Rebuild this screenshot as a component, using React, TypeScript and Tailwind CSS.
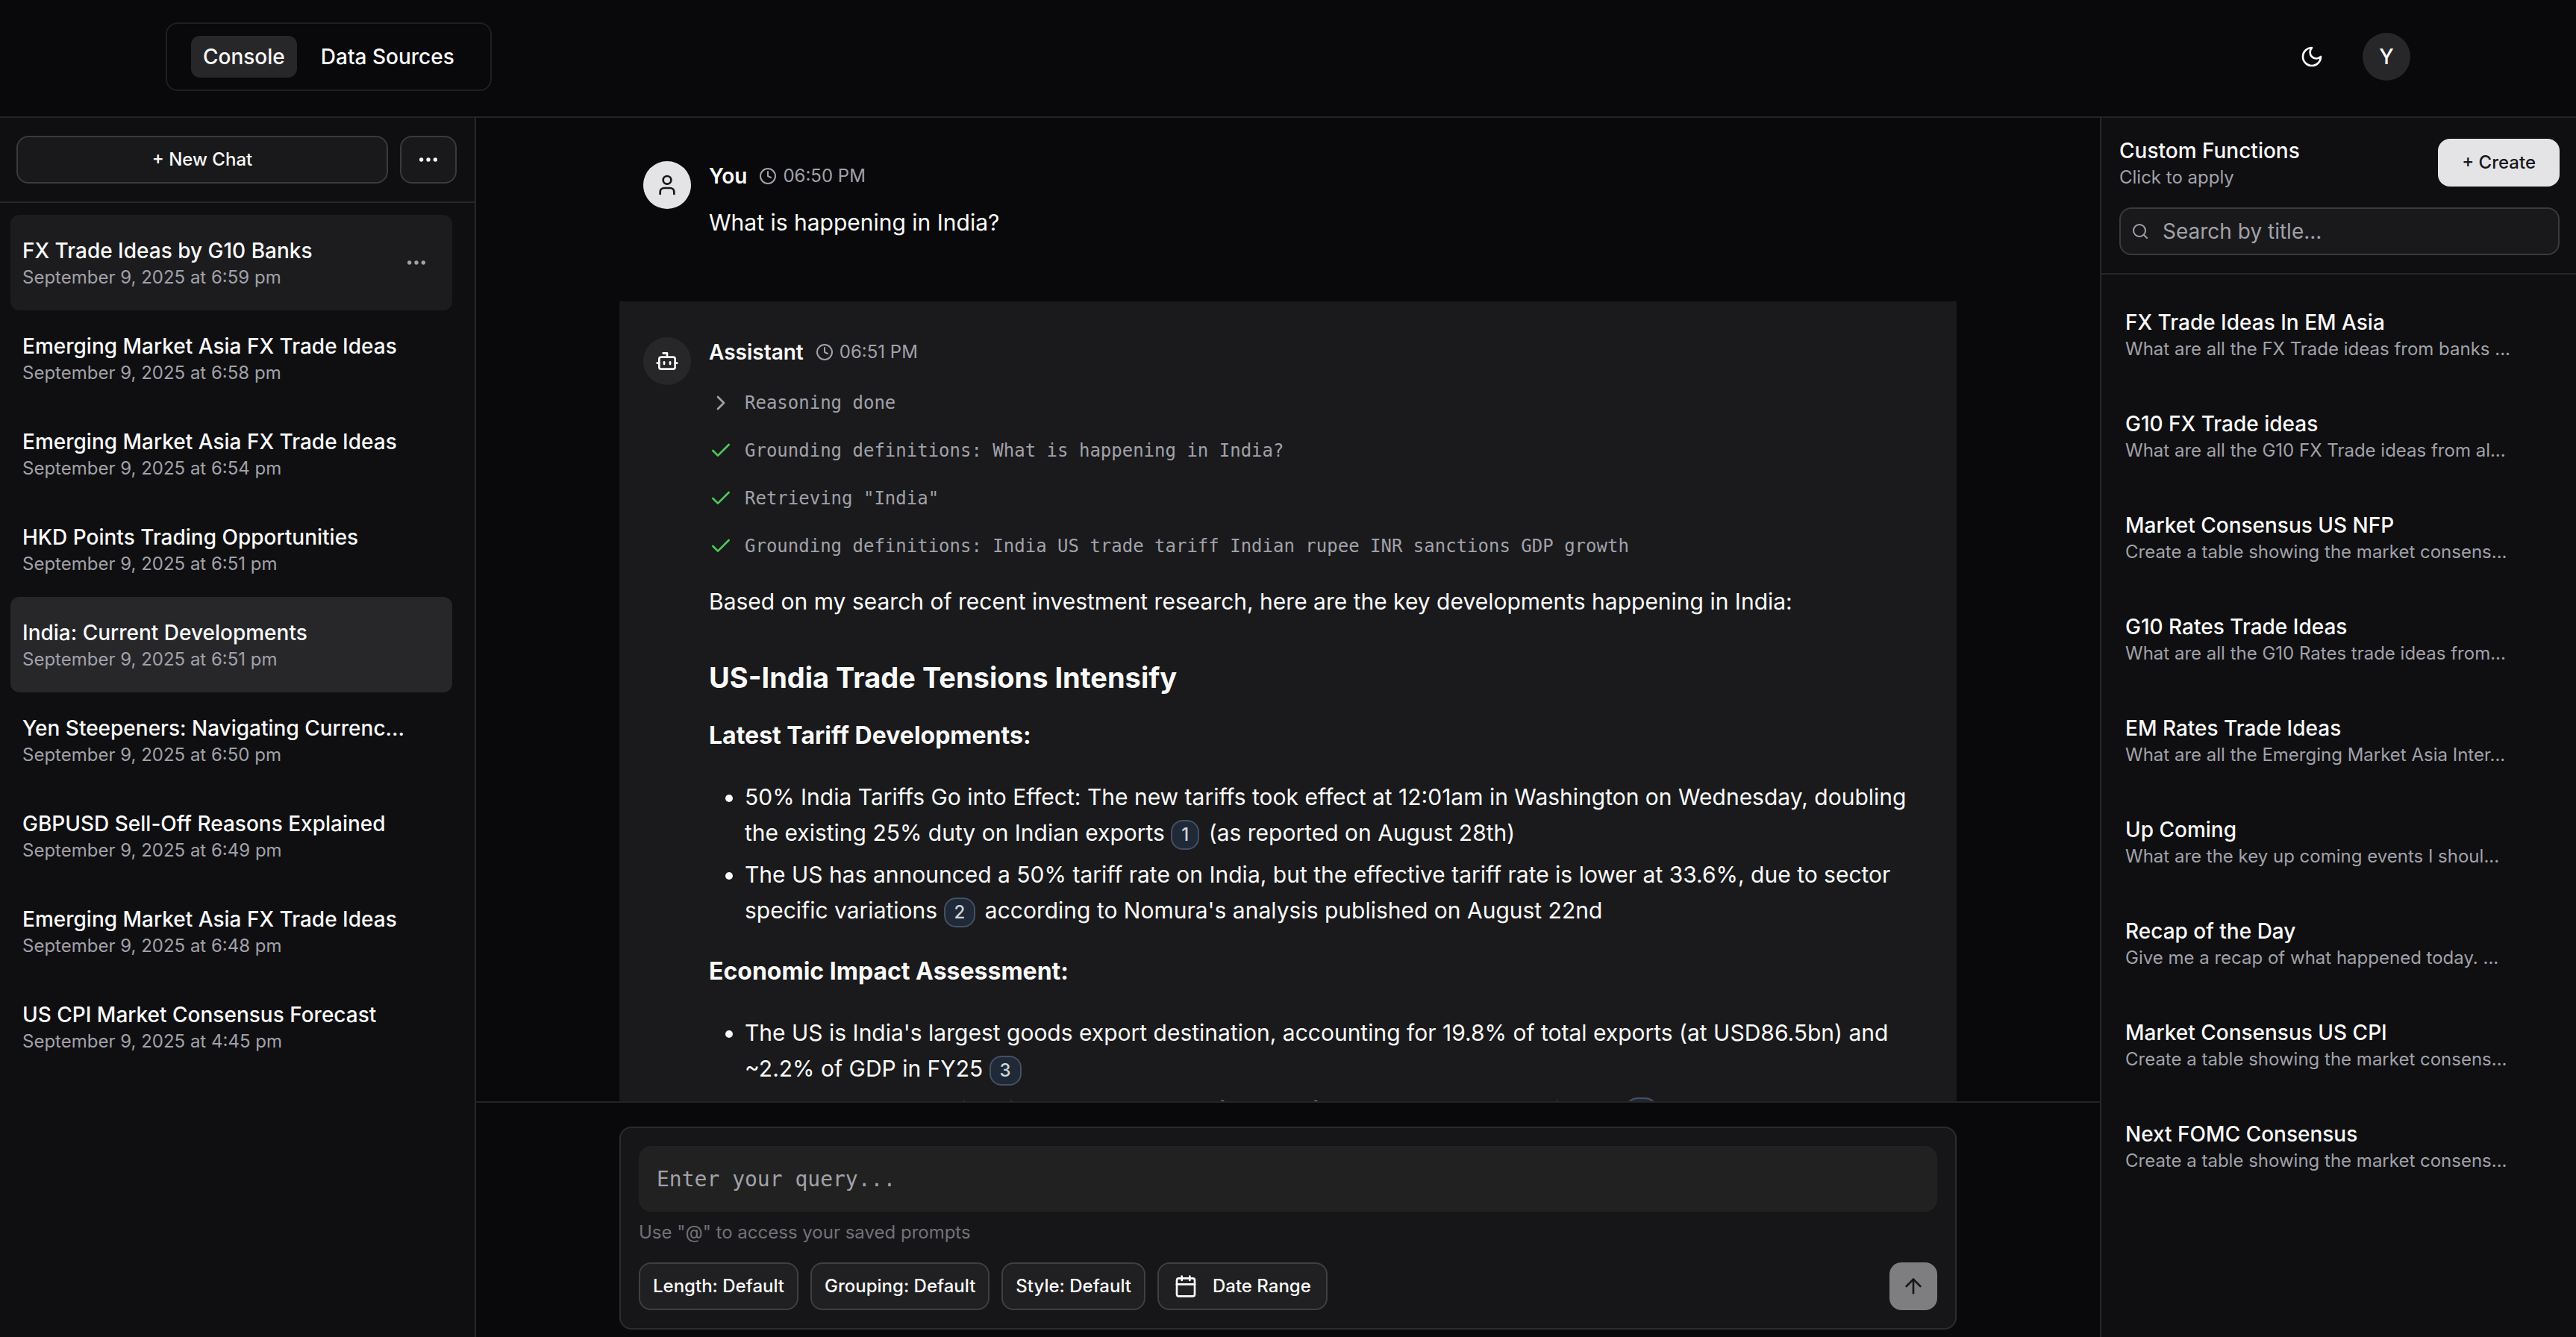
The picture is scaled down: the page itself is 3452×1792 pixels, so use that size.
import { FC, ReactNode } from "react";
import {
  ArrowUp,
  Bot,
  Calendar,
  Check,
  ChevronRight,
  Clock,
  Ellipsis,
  Search,
  User,
} from "lucide-react";

const chats = [
  { title: "FX Trade Ideas by G10 Banks", date: "September 9, 2025 at 6:59 pm", hovered: true },
  { title: "Emerging Market Asia FX Trade Ideas", date: "September 9, 2025 at 6:58 pm" },
  { title: "Emerging Market Asia FX Trade Ideas", date: "September 9, 2025 at 6:54 pm" },
  { title: "HKD Points Trading Opportunities", date: "September 9, 2025 at 6:51 pm" },
  { title: "India: Current Developments", date: "September 9, 2025 at 6:51 pm", active: true },
  { title: "Yen Steepeners: Navigating Currenc...", date: "September 9, 2025 at 6:50 pm" },
  { title: "GBPUSD Sell-Off Reasons Explained", date: "September 9, 2025 at 6:49 pm" },
  { title: "Emerging Market Asia FX Trade Ideas", date: "September 9, 2025 at 6:48 pm" },
  { title: "US CPI Market Consensus Forecast", date: "September 9, 2025 at 4:45 pm" },
];

const functions = [
  { title: "FX Trade Ideas In EM Asia", text: "What are all the FX Trade ideas from banks ..." },
  { title: "G10 FX Trade ideas", text: "What are all the G10 FX Trade ideas from al..." },
  { title: "Market Consensus US NFP", text: "Create a table showing the market consens..." },
  { title: "G10 Rates Trade Ideas", text: "What are all the G10 Rates trade ideas from..." },
  { title: "EM Rates Trade Ideas", text: "What are all the Emerging Market Asia Inter..." },
  { title: "Up Coming", text: "What are the key up coming events I shoul..." },
  { title: "Recap of the Day", text: "Give me a recap of what happened today. ..." },
  { title: "Market Consensus US CPI", text: "Create a table showing the market consens..." },
  { title: "Next FOMC Consensus", text: "Create a table showing the market consens..." },
];

const steps = [
  "Grounding definitions: What is happening in India?",
  'Retrieving "India"',
  "Grounding definitions: India US trade tariff Indian rupee INR sanctions GDP growth",
];

const MoonIcon: FC = () => {
  return (
    <svg
      className="size-8"
      viewBox="0 0 24 24"
      fill="none"
      stroke="currentColor"
      strokeWidth="2"
      strokeLinecap="round"
      strokeLinejoin="round"
    >
      <path d="M12 3a6 6 0 0 0 9 9 9 9 0 1 1-9-9Z" />
    </svg>
  );
};

const Header: FC = () => {
  return (
    <header className="shrink-0 border-b-2 border-[#242427]">
      <div className="mx-auto flex h-[156px] max-w-[3008px] items-center justify-between pb-1">
        <nav className="flex gap-4 rounded-2xl border-2 border-[#1f1f22] px-8 py-4 text-[28px] leading-10 font-medium">
          <a href="#console" className="rounded-xl bg-[#27272a] px-4 py-2">
            Console
          </a>
          <a href="#sources" className="rounded-xl px-4 py-2">
            Data Sources
          </a>
        </nav>
        <div className="flex items-center gap-9">
          <button aria-label="Toggle theme" className="flex size-16 items-center justify-center">
            <MoonIcon />
          </button>
          <button className="flex size-16 items-center justify-center rounded-full bg-[#27272a] text-[28px] font-medium">
            Y
          </button>
        </div>
      </div>
    </header>
  );
};

const ChatList: FC = () => {
  return (
    <aside className="w-[638px] shrink-0 border-r-2 border-[#27272a] bg-[#0f0f11]">
      <div className="flex gap-4 border-b-2 border-[#27272a] py-6 pr-6 pl-[22px]">
        <button className="h-16 flex-1 rounded-2xl border-2 border-[#3a3a3d] bg-[#19191b] text-2xl font-medium">
          + New Chat
        </button>
        <button
          aria-label="More options"
          className="flex h-16 w-[76px] items-center justify-center rounded-2xl border-2 border-[#3a3a3d] bg-[#19191b]"
        >
          <Ellipsis size={32} />
        </button>
      </div>
      <ul className="py-4 pr-[30px] pl-[14px]">
        {chats.map((chat, i) => (
          <li
            key={i}
            className={
              chat.active
                ? "flex h-32 items-center rounded-xl bg-[#27272a] px-4"
                : chat.hovered
                  ? "flex h-32 items-center rounded-xl bg-[#1c1c1e] px-4"
                  : "flex h-32 items-center rounded-xl px-4"
            }
          >
            <a href="#chat" className="flex-1">
              <p className="text-[28px] leading-10 font-medium">{chat.title}</p>
              <p className="text-2xl text-[#a1a1aa]">{chat.date}</p>
            </a>
            {chat.hovered && (
              <button aria-label="Chat options" className="mr-4 text-[#a1a1aa]">
                <Ellipsis size={32} />
              </button>
            )}
          </li>
        ))}
      </ul>
    </aside>
  );
};

const Cite: FC<{ n: number }> = ({ n }) => {
  return (
    <button className="mr-1 inline-flex h-10 items-center rounded-2xl border-2 border-[#465063] bg-[#1f2937] px-3 align-middle text-2xl leading-8 font-medium text-[#d1d5db]">
      {n}
    </button>
  );
};

type MessageProps = { name: string; time: string; avatar: ReactNode; children: ReactNode };

const Message: FC<MessageProps> = ({ name, time, avatar, children }) => {
  return (
    <div className="flex gap-6">
      {avatar}
      <div className="min-w-0 flex-1">
        <div className="flex h-10 items-center gap-4">
          <p className="text-[28px] font-semibold">{name}</p>
          <p className="flex items-center gap-2 text-2xl text-[#a1a1aa]">
            <Clock size={24} />
            {time}
          </p>
        </div>
        {children}
      </div>
    </div>
  );
};

const Conversation: FC = () => {
  return (
    <div className="min-h-0 flex-1 overflow-hidden pt-[10px]">
      <div className="mx-auto max-w-[1792px]">
        <div className="px-8 pt-12 pb-[82px]">
          <Message
            name="You"
            time="06:50 PM"
            avatar={
              <div className="flex size-16 items-center justify-center rounded-full bg-[#e4e4e7] text-[#18181b]">
                <User size={32} />
              </div>
            }
          >
            <p className="pt-[18px] text-[30px] leading-[48px]">What is happening in India?</p>
          </Message>
        </div>
        <div className="bg-[#1a1a1c] px-8 pt-12">
          <Message
            name="Assistant"
            time="06:51 PM"
            avatar={
              <div className="flex size-16 items-center justify-center rounded-full bg-[#27272a]">
                <Bot size={32} />
              </div>
            }
          >
            <ul className="flex flex-col gap-8 pt-8 font-['DejaVu_Sans_Mono',monospace] text-2xl text-[#a1a1aa]">
              <li className="flex items-center gap-4">
                <ChevronRight size={32} />
                Reasoning done
              </li>
              {steps.map((step) => (
                <li key={step} className="flex items-center gap-4">
                  <Check size={32} className="text-[#4bc95b]" />
                  {step}
                </li>
              ))}
            </ul>
            <div className="pt-[34px] text-[30px] leading-[48px]">
              <p>
                Based on my search of recent investment research, here are the key developments
                happening in India:
              </p>
              <h2 className="pt-12 text-[38px] leading-[60px] font-bold">
                US-India Trade Tensions Intensify
              </h2>
              <h3 className="pt-6 text-[32px] font-bold">Latest Tariff Developments:</h3>
              <ul className="flex list-disc flex-col gap-2 pt-[34px] pl-12">
                <li>
                  50% India Tariffs Go into Effect: The new tariffs took effect at 12:01am in
                  Washington on Wednesday, doubling the existing 25% duty on Indian exports{" "}
                  <Cite n={1} /> (as reported on August 28th)
                </li>
                <li>
                  The US has announced a 50% tariff rate on India, but the effective tariff rate is
                  lower at 33.6%, due to sector specific variations <Cite n={2} /> according to
                  Nomura's analysis published on August 22nd
                </li>
              </ul>
              <h3 className="pt-[34px] text-[32px] font-bold">Economic Impact Assessment:</h3>
              <ul className="flex list-disc flex-col gap-2 pt-[34px] pl-12">
                <li>
                  The US is India's largest goods export destination, accounting for 19.8% of total
                  exports (at USD86.5bn) and ~2.2% of GDP in FY25 <Cite n={3} />
                </li>
                <li>
                  Nomura sees downside risks to GDP growth forecast from prolonged trade
                  dispute <Cite n={4} />
                </li>
              </ul>
            </div>
          </Message>
        </div>
      </div>
    </div>
  );
};

const optionClass =
  "flex h-16 items-center rounded-2xl border-2 border-[#3f3f42] bg-[#202022] px-[17px] text-2xl font-medium";

const Composer: FC = () => {
  return (
    <form className="shrink-0 border-t-2 border-[#242427] pt-8 pb-[10px]">
      <div className="mx-auto max-w-[1792px] rounded-2xl border-2 border-[#2c2c2e] bg-[#161618] p-6">
        <input
          aria-label="Query"
          placeholder="Enter your query..."
          className="block h-[88px] w-full rounded-2xl bg-[#212121] px-6 font-['DejaVu_Sans_Mono',monospace] text-[28px] placeholder:text-[#a1a1aa]"
        />
        <p className="pt-3 text-2xl text-[#71717a]">Use "@" to access your saved prompts</p>
        <div className="flex gap-4 pt-6">
          <button type="button" className={optionClass}>
            Length: Default
          </button>
          <button type="button" className={optionClass}>
            Grouping: Default
          </button>
          <button type="button" className={optionClass}>
            Style: Default
          </button>
          <button
            type="button"
            className="flex h-16 items-center gap-5 rounded-2xl border-2 border-[#3f3f42] bg-[#202022] px-5 text-2xl font-medium"
          >
            <Calendar size={32} />
            Date Range
          </button>
          <button
            aria-label="Send"
            className="ml-auto flex size-16 items-center justify-center rounded-2xl bg-[#7e7e80] text-[#18181b]"
          >
            <ArrowUp size={32} />
          </button>
        </div>
      </div>
    </form>
  );
};

const FunctionList: FC = () => {
  return (
    <aside className="w-[638px] shrink-0 border-l-2 border-[#27272a] bg-[#0f0f11]">
      <div className="border-b-2 border-[#27272a] py-6 pr-[22px] pl-6">
        <div className="flex items-center justify-between">
          <div>
            <h2 className="text-[28px] leading-10 font-medium">Custom Functions</h2>
            <p className="text-2xl text-[#a1a1aa]">Click to apply</p>
          </div>
          <button className="h-16 rounded-2xl bg-[#e4e4e7] px-8 text-2xl font-medium text-[#18181b]">
            + Create
          </button>
        </div>
        <label className="mt-6 flex h-16 items-center gap-[18px] rounded-2xl border-2 border-[#3a3a3d] bg-[#19191b] px-[14px]">
          <Search size={24} className="shrink-0 text-[#a1a1aa]" />
          <input
            aria-label="Search by title"
            placeholder="Search by title..."
            className="min-w-0 flex-1 text-[28px] placeholder:text-[#a1a1aa]"
          />
        </label>
      </div>
      <ul className="flex flex-col gap-2 p-4">
        {functions.map((fn) => (
          <li key={fn.title}>
            <a href="#function" className="flex h-32 flex-col justify-center rounded-xl px-4">
              <p className="text-[28px] leading-10 font-medium">{fn.title}</p>
              <p className="text-2xl text-[#a1a1aa]">{fn.text}</p>
            </a>
          </li>
        ))}
      </ul>
    </aside>
  );
};

const App: FC = () => {
  return (
    <div className="flex h-screen flex-col bg-[#09090b] font-['Inter',sans-serif] text-[#fafafa]">
      <Header />
      <div className="flex min-h-0 flex-1">
        <ChatList />
        <main className="flex min-w-0 flex-1 flex-col">
          <Conversation />
          <Composer />
        </main>
        <FunctionList />
      </div>
    </div>
  );
};

export default App;
